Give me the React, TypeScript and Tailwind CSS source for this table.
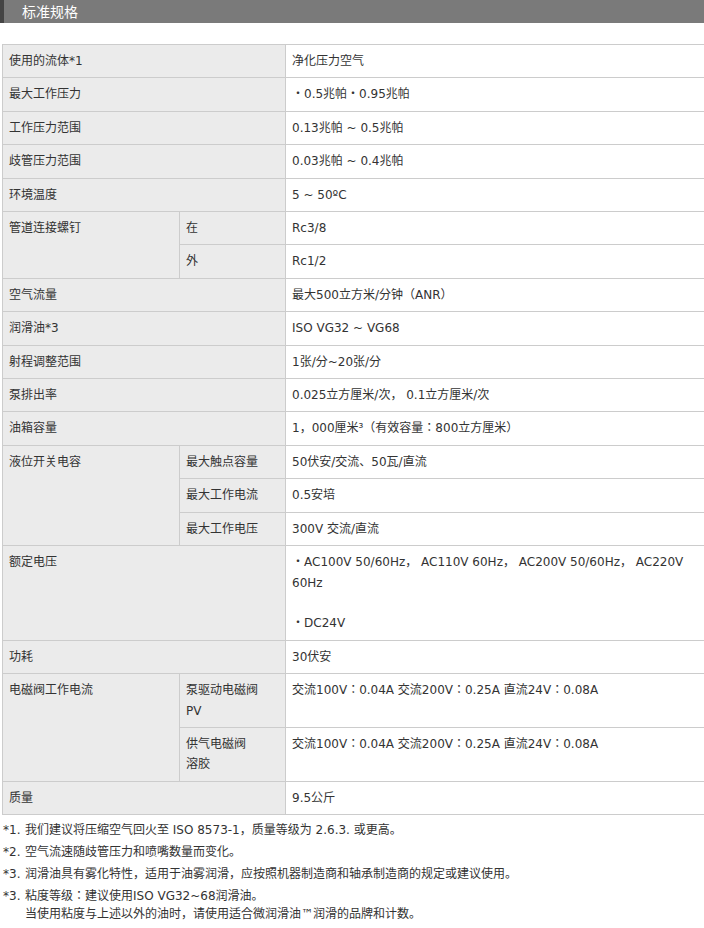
const FONT = "font-['DejaVu_Sans','Noto_Sans_CJK_JP',sans-serif]";

type Row =
  | { kind: "single"; label: string; value: React.ReactNode }
  | { kind: "group"; label: string; items: { sub: React.ReactNode; value: React.ReactNode }[] };

const ROWS: Row[] = [
  { kind: "single", label: "使用的流体*1", value: "净化压力空气" },
  { kind: "single", label: "最大工作压力", value: "・0.5兆帕・0.95兆帕" },
  { kind: "single", label: "工作压力范围", value: "0.13兆帕 ~ 0.5兆帕" },
  { kind: "single", label: "歧管压力范围", value: "0.03兆帕 ~ 0.4兆帕" },
  { kind: "single", label: "环境温度", value: "5 ~ 50ºC" },
  {
    kind: "group",
    label: "管道连接螺钉",
    items: [
      { sub: "在", value: "Rc3/8" },
      { sub: "外", value: "Rc1/2" },
    ],
  },
  { kind: "single", label: "空气流量", value: "最大500立方米/分钟（ANR）" },
  { kind: "single", label: "润滑油*3", value: "ISO VG32 ~ VG68" },
  { kind: "single", label: "射程调整范围", value: "1张/分~20张/分" },
  { kind: "single", label: "泵排出率", value: "0.025立方厘米/次， 0.1立方厘米/次" },
  { kind: "single", label: "油箱容量", value: "1，000厘米³（有效容量：800立方厘米）" },
  {
    kind: "group",
    label: "液位开关电容",
    items: [
      { sub: "最大触点容量", value: "50伏安/交流、50瓦/直流" },
      { sub: "最大工作电流", value: "0.5安培" },
      { sub: "最大工作电压", value: "300V 交流/直流" },
    ],
  },
  {
    kind: "single",
    label: "额定电压",
    value: (
      <>
        ・AC100V 50/60Hz， AC110V 60Hz， AC200V 50/60Hz， AC220V
        <br />
        60Hz
        <br />
        <br />
        ・DC24V
      </>
    ),
  },
  { kind: "single", label: "功耗", value: "30伏安" },
  {
    kind: "group",
    label: "电磁阀工作电流",
    items: [
      {
        sub: (
          <>
            泵驱动电磁阀
            <br />
            PV
          </>
        ),
        value: "交流100V：0.04A 交流200V：0.25A 直流24V：0.08A",
      },
      {
        sub: (
          <>
            供气电磁阀
            <br />
            溶胶
          </>
        ),
        value: "交流100V：0.04A 交流200V：0.25A 直流24V：0.08A",
      },
    ],
  },
  { kind: "single", label: "质量", value: "9.5公斤" },
];

const NOTES: { mark: string; lines: string[] }[] = [
  { mark: "*1.", lines: ["我们建议将压缩空气回火至 ISO 8573-1，质量等级为 2.6.3. 或更高。"] },
  { mark: "*2.", lines: ["空气流速随歧管压力和喷嘴数量而变化。"] },
  {
    mark: "*3.",
    lines: ["润滑油具有雾化特性，适用于油雾润滑，应按照机器制造商和轴承制造商的规定或建议使用。"],
  },
  {
    mark: "*3.",
    lines: [
      "粘度等级：建议使用ISO VG32~68润滑油。",
      "当使用粘度与上述以外的油时，请使用适合微润滑油™润滑的品牌和计数。",
    ],
  },
];

const th = "border border-[#cccccc] bg-[#ebebeb] px-[6px] py-[6px] text-left align-top font-normal";
const td = "border border-[#cccccc] bg-white px-[6px] py-[6px] text-left align-top";

export default function App() {
  return (
    <div className={`${FONT} w-[704px] min-h-[928px] bg-white text-[12px] text-[#333333]`}>
      <div className="flex h-[23px] items-center border-l-[4px] border-[#444444] bg-[#7a7a7a] pl-[18px]">
        <h2 className="text-[14px] font-normal leading-none text-white">标准规格</h2>
      </div>

      <div className="mt-[21px] overflow-hidden pl-[2px]">
        <table className="w-[705px] table-fixed border-collapse leading-[20.4px]">
          <colgroup>
            <col className="w-[177px]" />
            <col className="w-[106px]" />
            <col />
          </colgroup>
          <tbody>
            {ROWS.flatMap((row, i) => {
              if (row.kind === "single") {
                return [
                  <tr key={i}>
                    <th colSpan={2} className={th}>
                      {row.label}
                    </th>
                    <td className={td}>{row.value}</td>
                  </tr>,
                ];
              }
              return row.items.map((item, j) => (
                <tr key={`${i}-${j}`}>
                  {j === 0 && (
                    <th rowSpan={row.items.length} className={th}>
                      {row.label}
                    </th>
                  )}
                  <th className={th}>{item.sub}</th>
                  <td className={td}>{item.value}</td>
                </tr>
              ));
            })}
          </tbody>
        </table>
      </div>

      <div className="mt-[6px] flex flex-col gap-[4px] pl-[3px] leading-[18px]">
        {NOTES.map((note, i) => (
          <div key={i} className="flex">
            <span className="w-[22px] shrink-0">{note.mark}</span>
            <div>
              {note.lines.map((line, k) => (
                <p key={k}>{line}</p>
              ))}
            </div>
          </div>
        ))}
      </div>
    </div>
  );
}
